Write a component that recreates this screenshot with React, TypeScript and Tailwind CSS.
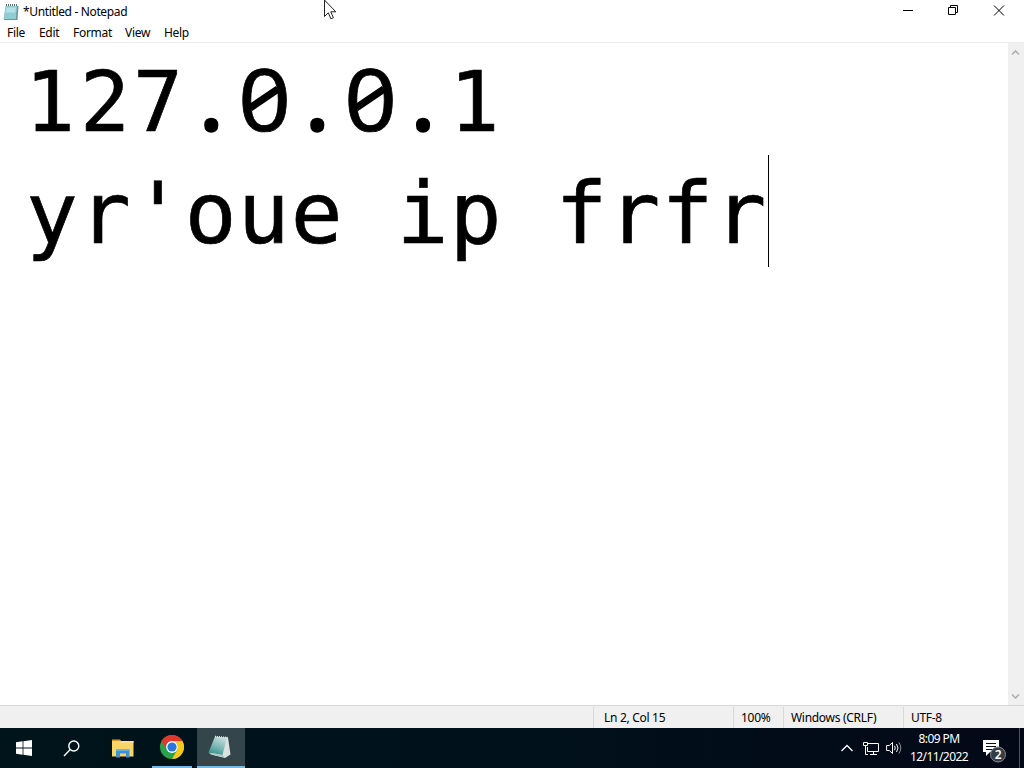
import type { ReactNode } from 'react';

const menuItems = [
  { label: 'File', className: 'w-8' },
  { label: 'Edit', className: 'w-[34px]' },
  { label: 'Format', className: 'w-[52px]' },
  { label: 'View', className: 'w-[39px]' },
  { label: 'Help', className: 'w-10' },
];

const statusCells = [
  { label: 'Ln 2, Col 15', className: 'w-[140px] pl-[10px]' },
  { label: '100%', className: 'w-[50px] pl-[7px]' },
  { label: 'Windows (CRLF)', className: 'w-[120px] pl-[7px]' },
  { label: 'UTF-8', className: 'w-[121px] pl-[7px]' },
];

function NotepadIcon() {
  return (
    <svg width="16" height="17" viewBox="0 0 16 17">
      <path d="M3 2h12.500l-1 14H1z" fill="#6f9296" />
      <path d="M2.500 2h11.500l-1 13H.5z" fill="#8fcdd3" />
      <path d="M3.500 3.500h9.500l-.8 5H2.800z" fill="#b4e2e6" />
      <path d="M3 1h12" stroke="#56686c" strokeWidth="2" strokeDasharray="1 1" />
    </svg>
  );
}

function NotepadTaskIcon() {
  return (
    <svg width="24" height="24" viewBox="0 0 24 24">
      <defs>
        <linearGradient id="pad" x1="0.6" y1="0" x2="0.2" y2="1">
          <stop offset="0" stopColor="#c5dcdc" />
          <stop offset="0.5" stopColor="#7fb9b8" />
          <stop offset="1" stopColor="#2d9089" />
        </linearGradient>
      </defs>
      <path d="M17 2 20 2.500l2.500 17-5.500 3.500-14-3.500z" fill="#dbe3e1" />
      <path d="M7 1.500 19 2.500 14.500 20 .5 17.500z" fill="url(#pad)" />
      <path d="M.5 17.500 14.500 20 17 22.500 3 19.500z" fill="#b4c6c4" />
      <path d="M7 1.500 19.500 2.500" stroke="#dce9e8" strokeWidth="1.500" strokeDasharray="1 1" />
    </svg>
  );
}

function WindowsIcon() {
  return (
    <svg width="16" height="16" viewBox="0 0 16 16" fill="#fff">
      <path d="M0 2.200 6.600 1.300v6.300H0zM7.400 1.200 16 0v7.600H7.400zM0 8.400h6.600v6.300L0 13.800zM7.400 8.400H16V16l-8.600-1.200z" />
    </svg>
  );
}

function SearchIcon() {
  return (
    <svg width="17" height="17" viewBox="0 0 17 17" fill="none" stroke="#fff" strokeWidth="1.400">
      <circle cx="10.800" cy="6" r="5" />
      <path d="M7.200 9.600 1 16" />
    </svg>
  );
}

function ExplorerIcon() {
  return (
    <svg width="22" height="19" viewBox="0 0 22 19">
      <path d="M0 .5h8l1.500 2H0z" fill="#dd9a1f" />
      <path d="M0 2h21.500v15.500H0z" fill="#f9d568" />
      <path d="M0 3.500h8l1.500-1.500h12v2H0z" fill="#fce08a" />
      <path d="M4 10.500h13.500v8H14v-4H8v4H4z" fill="#3d93cf" />
      <path d="M4 10.500h13.500v1.500H4z" fill="#63b1e0" />
    </svg>
  );
}

function ChromeIcon() {
  return (
    <svg width="24" height="24" viewBox="0 0 24 24">
      <circle cx="12" cy="12" r="12" fill="#2ba14b" />
      <path d="M1.600 6A12 12 0 0 1 22.400 6H12a6 6 0 0 0-5.200 9z" fill="#e2382b" />
      <path d="M22.400 6A12 12 0 0 1 12 24l5.200-9A6 6 0 0 0 12 6z" fill="#fbc91a" />
      <circle cx="12" cy="12" r="5.900" fill="#fff" />
      <circle cx="12" cy="12" r="4.600" fill="#2a76e0" />
    </svg>
  );
}

function NetworkIcon() {
  return (
    <svg width="17" height="15" viewBox="0 0 17 15" fill="none" stroke="#fff">
      <path d="M5 2.500h10.500v8H4.500V6M10.500 10.500v3M7 13.500h7" />
      <path d="M.5 1.500h4v3h-4zM2.500 4.500v9H5" />
    </svg>
  );
}

function VolumeIcon() {
  return (
    <svg width="17" height="14" viewBox="0 0 17 14" fill="none" stroke="#fff">
      <path d="M.6 4.500h2.700L6.500 1.500v11L3.300 9.500H.6z" />
      <path d="M8.500 4.800q1.500 2.200 0 4.400M10.500 3q3 4 0 8" />
      <path d="M12.800 1.300q4 5.700 0 11.400" stroke="#8b929b" />
    </svg>
  );
}

function NotificationIcon() {
  return (
    <svg width="26" height="26" viewBox="0 0 26 26">
      <path d="M1 1h16v12H8l-4 4v-4H1z" fill="#fff" />
      <path d="M4 4.500h10M4 7.500h10M4 10.500h7" stroke="#06101d" />
      <circle cx="16" cy="15.500" r="7.500" fill="#363c44" stroke="#858b92" />
      <text x="16" y="20" textAnchor="middle" fontSize="12" fontWeight="600" fill="#fff">2</text>
    </svg>
  );
}

function MousePointer() {
  return (
    <svg className="absolute left-[324px] top-0" width="14" height="20" viewBox="0 0 14 20">
      <path d="M.5 0v16.500l3.800-3.700 2.600 6 2.500-1.100-2.600-5.900h5z" fill="#fff" stroke="#222" />
    </svg>
  );
}

// Zero with a diagonal bar, one character cell wide
function SlashedZero() {
  return (
    <span className="relative mt-[-3px] w-[52.950px] text-center font-['Noto_Sans'] text-[86px] tracking-normal">
      <span className="inline-block scale-x-[1.070]">0</span>
      <svg className="absolute left-[8px] top-[40px]" width="36" height="32" viewBox="0 0 36 32">
        <path d="M4 26 32 7" stroke="#000" strokeWidth="7.500" />
      </svg>
    </span>
  );
}

function RoundDot() {
  return (
    <span className="mt-[-4px] w-[52.950px] text-center font-['Noto_Sans'] text-[86px] tracking-normal [-webkit-text-stroke:3.500px_#000]">
      .
    </span>
  );
}

function TaskButton({ className, children }: { className: string; children: ReactNode }) {
  return <button className={`flex h-10 items-center justify-center ${className}`}>{children}</button>;
}

export default function App() {
  return (
    <div className="relative flex h-[768px] w-[1024px] flex-col overflow-hidden bg-white font-['Noto_Sans',sans-serif] text-xs tracking-[-0.300px] text-black">
      <header className="flex h-6 items-center">
        <div className="flex flex-1 items-center pl-[3px]">
          <NotepadIcon />
          <span className="ml-1 tracking-[-0.350px]">*Untitled - Notepad</span>
        </div>
        <svg className="mb-1" width="136" height="20" viewBox="888 0 136 20" fill="none" stroke="#000">
          <path d="M903 10.500h10M948.500 7.500h7v7h-7zM950.500 7.500v-2h7v7h-2M994 5.500l10 10M1004 5.500l-10 10" />
        </svg>
      </header>

      <nav className="flex h-[18px] items-center pl-[7px]">
        {menuItems.map((item) => (
          <span key={item.label} className={item.className}>
            {item.label}
          </span>
        ))}
      </nav>

      <main className="flex h-[663px] border-t border-[#ececec]">
        <div className="flex-1 whitespace-pre pl-[26px] pt-[2px] font-['DejaVu_Sans_Mono',monospace] text-[86px] leading-[112px] tracking-[1.180px] [-webkit-text-stroke:0.700px_#000]">
          <div className="flex h-[112px] text-[83px] tracking-[2.980px]">
            <span className="ml-[-1px] mt-[2px] w-[54.950px]">1</span>
            <span className="mt-[2px] w-[104.900px]">27</span>
            <RoundDot />
            <SlashedZero />
            <RoundDot />
            <SlashedZero />
            <RoundDot />
            <span className="mt-[2px]">1</span>
          </div>
          <div className="flex h-[112px]">
            yr'oue ip frfr
            <span className="ml-px mt-[-2px] h-[112px] w-px bg-black" />
          </div>
        </div>
        <div className="flex w-4 flex-col items-center justify-between bg-[#f0f0f0] py-[6px] pr-px">
          <svg width="9" height="7" viewBox="0 0 9 7" fill="none" stroke="#b0b0b0" strokeWidth="1.600">
            <path d="M1 5.500 4.500 2 8 5.500" />
          </svg>
          <svg width="9" height="7" viewBox="0 0 9 7" fill="none" stroke="#b0b0b0" strokeWidth="1.600">
            <path d="M1 2.500 4.500 6 8 2.500" />
          </svg>
        </div>
      </main>

      <div className="flex h-[23px] items-end justify-end border-t border-[#d7d7d7] bg-[#f0f0f0]">
        {statusCells.map((cell) => (
          <span
            key={cell.label}
            className={`h-[21px] shrink-0 border-l border-[#d9d9d9] leading-[21px] ${cell.className}`}
          >
            {cell.label}
          </span>
        ))}
      </div>

      <footer className="flex h-10 items-center bg-linear-to-r from-[#00141b] via-[#00111b] to-[#030817] text-white">
        <TaskButton className="w-12">
          <WindowsIcon />
        </TaskButton>
        <TaskButton className="w-12 pr-px">
          <SearchIcon />
        </TaskButton>
        <TaskButton className="w-[53px]">
          <ExplorerIcon />
        </TaskButton>
        <TaskButton className="ml-[3px] w-10 border-b-2 border-[#76b9ed]">
          <ChromeIcon />
        </TaskButton>
        <TaskButton className="ml-[5px] w-12 border-b-2 border-[#76b9ed] bg-[#34454c] pr-[2px]">
          <NotepadTaskIcon />
        </TaskButton>
        <div className="ml-auto flex h-full items-center">
          <svg width="12" height="8" viewBox="0 0 12 8" fill="none" stroke="#fff" strokeWidth="1.300">
            <path d="M.5 7 6 1.500 11.500 7" />
          </svg>
          <div className="ml-[10px]">
            <NetworkIcon />
          </div>
          <div className="ml-[6px]">
            <VolumeIcon />
          </div>
          <div className="ml-[6px] w-[60px] whitespace-nowrap text-center leading-[18px] tracking-[-0.600px]">
            <div>8:09 PM</div>
            <div>12/11/2022</div>
          </div>
          <div className="ml-[13px] mt-[7px]">
            <NotificationIcon />
          </div>
          <div className="ml-[11px] h-full w-[5px] border-l border-[#4c535c]" />
        </div>
      </footer>

      <MousePointer />
    </div>
  );
}
